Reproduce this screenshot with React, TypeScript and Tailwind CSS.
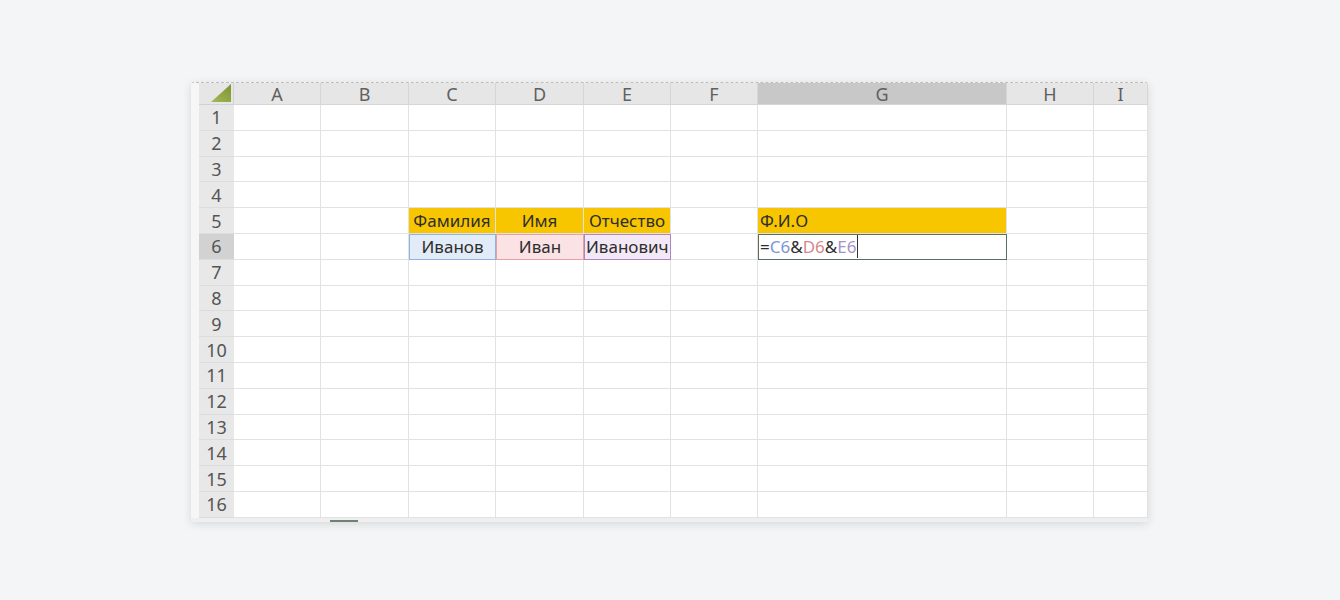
const COLS = ["A", "B", "C", "D", "E", "F", "G", "H", "I"];
const ROWS = Array.from({ length: 16 }, (_, i) => i + 1);

type Cell = { text?: React.ReactNode; cls?: string; boxed?: boolean };

const cells: Record<string, Cell> = {
  C5: { text: "Фамилия", cls: "bg-[#f7c600] text-[#2b2300] justify-center" },
  D5: { text: "Имя", cls: "bg-[#f7c600] text-[#2b2300] justify-center" },
  E5: { text: "Отчество", cls: "bg-[#f7c600] text-[#2b2300] justify-center" },
  G5: { text: "Ф.И.О", cls: "bg-[#f7c600] text-[#2b2300] justify-start pl-[2px]" },
  C6: {
    text: "Иванов",
    boxed: true,
    cls: "bg-[#e1ecf8] border border-[#93b1df] justify-center",
  },
  D6: {
    text: "Иван",
    boxed: true,
    cls: "bg-[#fbe2e4] border border-[#e6a0a8] justify-center",
  },
  E6: {
    text: "Иванович",
    boxed: true,
    cls: "bg-[#f3e8f5] border border-[#b084bf] justify-start pl-[1px] overflow-visible",
  },
  G6: {
    text: (
      <span className="flex items-center">
        <span>=</span>
        <span className="text-[#7b98d4]">C6</span>
        <span>&amp;</span>
        <span className="text-[#d9878d]">D6</span>
        <span>&amp;</span>
        <span className="text-[#a594c6]">E6</span>
        <span className="ml-[1px] h-[23px] w-px bg-[#333]" />
      </span>
    ),
    boxed: true,
    cls: "border border-[#5a6f5f] justify-start pl-[1px]",
  },
};

export default function App() {
  return (
    <div className="min-h-[600px] w-[1340px] bg-[#f4f5f7] pl-[191px] pt-[82px] font-['Noto_Sans','Liberation_Sans',sans-serif]">
      <div className="w-[957px] overflow-hidden rounded-[3px] bg-[#f6f6f6] shadow-[0_2px_10px_rgba(0,0,0,0.12)]">
        <div className="flex border-t border-dashed border-[#bdbdbd]">
          <div className="w-2 shrink-0 bg-[#f6f6f6]" />
          <div className="grid grid-cols-[35px_87px_88px_87px_88px_87px_87px_249px_87px_54px] grid-rows-[22px_repeat(16,25.8px)] bg-white text-[17px] leading-none">
            {/* corner */}
            <div className="relative border-b border-r border-[#d2d2d2] bg-[#e6e6e6]">
              <svg className="absolute bottom-[2px] right-[2px]" width="20" height="18" viewBox="0 0 20 18">
                <defs>
                  <linearGradient id="tri" x1="0" y1="1" x2="1" y2="0">
                    <stop offset="0" stopColor="#a6b85a" />
                    <stop offset="1" stopColor="#7d9430" />
                  </linearGradient>
                </defs>
                <polygon points="0,18 20,18 20,0" fill="url(#tri)" />
              </svg>
            </div>
            {COLS.map((c) => (
              <div
                key={c}
                className={`flex items-center justify-center border-b border-r border-[#d6d6d6] text-[18px] text-[#606060] ${
                  c === "G" ? "bg-[#c8c8c8]" : "bg-[#e6e6e6]"
                }`}
              >
                {c}
              </div>
            ))}
            {ROWS.map((r) => (
              <Row key={r} r={r} />
            ))}
          </div>
        </div>
        <div className="relative h-[4px] bg-[#efefef]">
          <div className="absolute left-[139px] top-[2px] h-[2px] w-[28px] bg-[#6d8372]" />
        </div>
      </div>
    </div>
  );
}

function Row({ r }: { r: number }) {
  return (
    <>
      <div
        className={`flex items-center justify-center border-b border-[#dcdcdc] text-[18px] text-[#555] ${
          r === 6 ? "bg-[#d2d2d2]" : "bg-[#e8e8e8]"
        }`}
      >
        {r}
      </div>
      {COLS.map((c) => {
        const cell = cells[`${c}${r}`];
        const grid = cell?.boxed ? "" : "border-b border-r border-[#e2e2e2]";
        return (
          <div
            key={c}
            className={`flex items-center whitespace-nowrap text-[#2e2e2e] ${grid} ${cell?.cls ?? ""}`}
          >
            {cell?.text}
          </div>
        );
      })}
    </>
  );
}
